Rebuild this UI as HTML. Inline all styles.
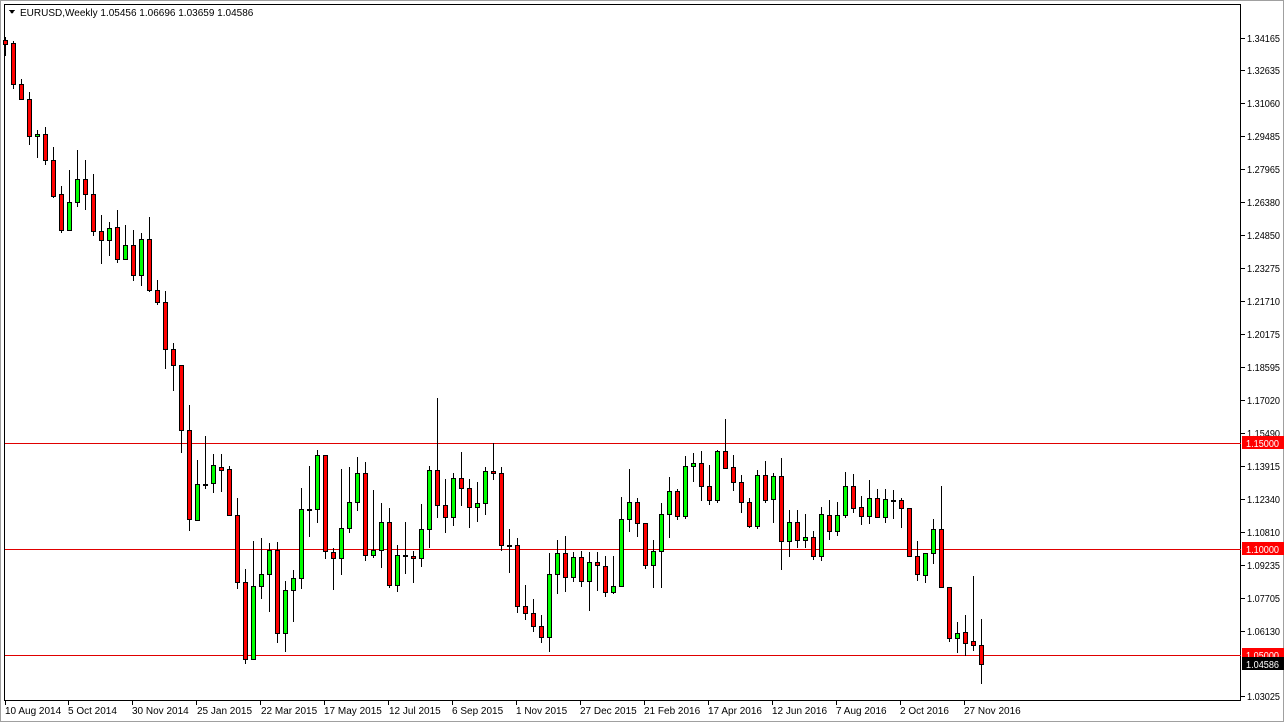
<!DOCTYPE html>
<html><head><meta charset="utf-8">
<style>
html,body{margin:0;padding:0;background:#fff;}
body{width:1285px;height:723px;overflow:hidden;position:relative;font-family:"Liberation Sans",sans-serif;}
svg{position:absolute;left:0;top:0;}
svg text{font-family:"Liberation Sans",sans-serif;font-size:10px;}
</style></head>
<body>
<svg id="c" width="1285" height="723" viewBox="0 0 1285 723" xmlns="http://www.w3.org/2000/svg" shape-rendering="crispEdges">
<rect x="0" y="0" width="1285" height="723" fill="#fff"/>
<rect x="0.5" y="0.5" width="1283" height="721" fill="none" stroke="#a0a0a0"/>
<rect x="4.5" y="4.5" width="1236" height="696" fill="none" stroke="#000"/>
<line x1="5" y1="443.5" x2="1241" y2="443.5" stroke="#e00000"/>
<line x1="5" y1="549.5" x2="1241" y2="549.5" stroke="#e00000"/>
<line x1="5" y1="655.5" x2="1241" y2="655.5" stroke="#e00000"/>
<g id="candles"></g>
<g id="axis" fill="#000">
<text x="1247" y="42" textLength="33" lengthAdjust="spacingAndGlyphs">1.34165</text>
<text x="1247" y="74" textLength="33" lengthAdjust="spacingAndGlyphs">1.32635</text>
<text x="1247" y="107" textLength="33" lengthAdjust="spacingAndGlyphs">1.31060</text>
<text x="1247" y="140" textLength="33" lengthAdjust="spacingAndGlyphs">1.29485</text>
<text x="1247" y="173" textLength="33" lengthAdjust="spacingAndGlyphs">1.27965</text>
<text x="1247" y="206" textLength="33" lengthAdjust="spacingAndGlyphs">1.26380</text>
<text x="1247" y="239" textLength="33" lengthAdjust="spacingAndGlyphs">1.24850</text>
<text x="1247" y="272" textLength="33" lengthAdjust="spacingAndGlyphs">1.23275</text>
<text x="1247" y="305" textLength="33" lengthAdjust="spacingAndGlyphs">1.21710</text>
<text x="1247" y="338" textLength="33" lengthAdjust="spacingAndGlyphs">1.20175</text>
<text x="1247" y="371" textLength="33" lengthAdjust="spacingAndGlyphs">1.18595</text>
<text x="1247" y="404" textLength="33" lengthAdjust="spacingAndGlyphs">1.17020</text>
<text x="1247" y="437" textLength="33" lengthAdjust="spacingAndGlyphs">1.15490</text>
<text x="1247" y="470" textLength="33" lengthAdjust="spacingAndGlyphs">1.13915</text>
<text x="1247" y="503" textLength="33" lengthAdjust="spacingAndGlyphs">1.12340</text>
<text x="1247" y="536" textLength="33" lengthAdjust="spacingAndGlyphs">1.10810</text>
<text x="1247" y="569" textLength="33" lengthAdjust="spacingAndGlyphs">1.09235</text>
<text x="1247" y="602" textLength="33" lengthAdjust="spacingAndGlyphs">1.07705</text>
<text x="1247" y="635" textLength="33" lengthAdjust="spacingAndGlyphs">1.06130</text>
<text x="1247" y="700" textLength="33" lengthAdjust="spacingAndGlyphs">1.03025</text>
</g>
<rect x="1242" y="436" width="42" height="13" fill="#f00"/>
<text x="1246" y="447" fill="#fff" textLength="33" lengthAdjust="spacingAndGlyphs">1.15000</text>
<rect x="1242" y="542" width="42" height="13" fill="#f00"/>
<text x="1246" y="553" fill="#fff" textLength="33" lengthAdjust="spacingAndGlyphs">1.10000</text>
<rect x="1242" y="648" width="42" height="13" fill="#f00"/>
<text x="1246" y="659" fill="#fff" textLength="33" lengthAdjust="spacingAndGlyphs">1.05000</text>
<rect x="1242" y="657" width="42" height="13" fill="#000"/>
<text x="1246" y="668" fill="#fff" textLength="33" lengthAdjust="spacingAndGlyphs">1.04586</text>
<g fill="#000">
<text x="5" y="714">10 Aug 2014</text>
<text x="68" y="714">5 Oct 2014</text>
<text x="132" y="714">30 Nov 2014</text>
<text x="197" y="714">25 Jan 2015</text>
<text x="261" y="714">22 Mar 2015</text>
<text x="324" y="714">17 May 2015</text>
<text x="389" y="714">12 Jul 2015</text>
<text x="452" y="714">6 Sep 2015</text>
<text x="516" y="714">1 Nov 2015</text>
<text x="580" y="714">27 Dec 2015</text>
<text x="644" y="714">21 Feb 2016</text>
<text x="708" y="714">17 Apr 2016</text>
<text x="772" y="714">12 Jun 2016</text>
<text x="836" y="714">7 Aug 2016</text>
<text x="900" y="714">2 Oct 2016</text>
<text x="964" y="714">27 Nov 2016</text>
</g>
<path d="M9 10 L15 10 L12 14 Z" fill="#000"/>
<text x="20" y="16" fill="#000">EURUSD,Weekly  1.05456 1.06696 1.03659 1.04586</text>
</svg>
<script>
var d=[
[5,37,40,44,55],[13,41,43,84,88],[21,79,84,99,99],[29,92,99,136,144],[37,130,136,134,157],[45,127,134,160,164],
[53,147,160,196,197],[61,186,194,230,232],[69,170,230,202,230],[77,150,202,179,206],[85,160,179,194,209],[93,174,194,231,235],
[101,215,231,240,263],[109,222,240,228,255],[117,210,227,259,262],[125,225,259,245,259],[133,230,245,275,280],[141,233,275,239,285],
[149,217,239,290,291],[157,280,290,302,304],[165,291,302,349,368],[173,343,349,365,390],[181,365,365,430,452],[189,405,430,519,530],
[197,460,520,484,520],[205,436,484,484,488],[213,454,483,465,492],[221,454,467,470,491],[229,466,469,515,515],[237,498,515,582,588],
[245,569,582,659,663],[253,541,659,586,659],[261,538,586,574,598],[269,543,574,550,611],[277,542,550,633,642],[285,581,633,590,651],
[293,570,590,578,621],[301,488,578,509,588],[309,466,509,509,536],[317,450,509,455,522],[325,455,455,551,558],[333,548,552,558,589],
[341,469,558,528,574],[349,467,528,502,532],[357,457,502,473,510],[365,462,473,555,560],[373,490,555,550,557],[381,503,550,522,567],
[389,508,522,585,587],[397,545,585,555,591],[405,522,555,555,573],[413,551,556,558,582],[421,504,558,529,566],[429,466,529,470,547],
[437,398,470,505,517],[445,479,505,517,532],[453,473,517,478,525],[461,452,478,488,505],[469,479,488,507,527],[477,482,507,503,521],
[485,467,503,471,514],[493,443,471,473,479],[501,467,473,545,550],[509,529,545,545,572],[517,538,545,606,612],[525,585,606,613,619],
[533,599,613,626,631],[541,615,626,637,642],[549,553,637,574,651],[557,540,574,553,593],[565,536,553,577,591],[573,552,577,557,581],
[581,551,557,581,586],[589,552,581,562,610],[597,552,562,565,590],[605,556,566,592,596],[613,556,592,586,593],[621,497,586,519,586],
[629,469,519,502,531],[637,498,502,523,536],[645,523,523,565,568],[653,540,565,551,587],[661,503,551,514,587],[669,477,514,491,537],
[677,489,491,516,519],[685,456,516,466,518],[693,453,466,463,481],[701,451,463,486,500],[709,465,486,500,504],[717,450,500,451,502],
[725,419,451,468,468],[733,455,467,482,490],[741,475,482,502,512],[749,498,502,526,527],[757,470,526,475,528],[765,461,475,500,502],
[773,473,499,476,522],[781,458,476,541,569],[789,510,541,522,556],[797,510,522,540,547],[805,514,540,537,547],[813,531,537,556,559],
[821,507,556,514,560],[829,500,515,531,539],[837,502,531,515,535],[845,472,515,486,517],[853,474,486,508,512],[861,496,507,516,524],
[869,480,516,498,523],[877,489,498,517,517],[885,489,517,499,522],[893,490,500,500,518],[901,498,500,508,527],[909,508,508,556,556],
[917,541,556,574,580],[925,553,575,553,582],[933,519,553,529,563],[941,486,529,587,587],[949,587,587,638,641],[957,622,638,633,652],
[965,615,632,643,655],[973,576,641,645,650],[981,619,645,664,683]];
var ns="http://www.w3.org/2000/svg",g=document.getElementById("candles");
d.forEach(function(c){
 var x=c[0],h=c[1],o=c[2],cl=c[3],l=c[4];
 var w=document.createElementNS(ns,"line");
 w.setAttribute("x1",x+0.5);w.setAttribute("x2",x+0.5);w.setAttribute("y1",h);w.setAttribute("y2",l+1);w.setAttribute("stroke","#000");
 g.appendChild(w);
 var t=Math.min(o,cl),b=Math.max(o,cl);
 var r=document.createElementNS(ns,"rect");
 if(b-t<1){r.setAttribute("x",x-2);r.setAttribute("y",t);r.setAttribute("width",5);r.setAttribute("height",2);r.setAttribute("fill","#000");}
 else{r.setAttribute("x",x-1.5);r.setAttribute("y",t+0.5);r.setAttribute("width",4);r.setAttribute("height",b-t);
 r.setAttribute("fill",cl<o?"#00ff00":"#ff0000");r.setAttribute("stroke","#000");}
 g.appendChild(r);
});
var a=document.getElementById("axis");
[38,70,103,136,169,202,235,268,301,334,367,400,433,466,499,532,565,598,631,696].forEach(function(y){
 var t=document.createElementNS(ns,"line");t.setAttribute("x1",1241);t.setAttribute("x2",1245);t.setAttribute("y1",y+0.5);t.setAttribute("y2",y+0.5);t.setAttribute("stroke","#000");a.appendChild(t);});
[5,68,132,196,260,324,388,452,516,580,644,708,772,836,900,964].forEach(function(x){
 var t=document.createElementNS(ns,"line");t.setAttribute("x1",x+0.5);t.setAttribute("x2",x+0.5);t.setAttribute("y1",701);t.setAttribute("y2",705);t.setAttribute("stroke","#000");a.appendChild(t);});
</script>
</body></html>
